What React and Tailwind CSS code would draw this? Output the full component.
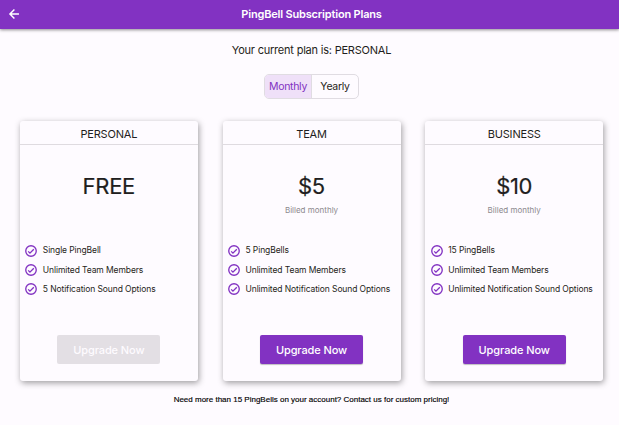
import React from 'react';

const plans = [
  {
    name: 'PERSONAL',
    price: 'FREE',
    features: ['Single PingBell', 'Unlimited Team Members', '5 Notification Sound Options'],
    current: true,
  },
  {
    name: 'TEAM',
    price: '$5',
    billing: 'Billed monthly',
    features: ['5 PingBells', 'Unlimited Team Members', 'Unlimited Notification Sound Options'],
  },
  {
    name: 'BUSINESS',
    price: '$10',
    billing: 'Billed monthly',
    features: ['15 PingBells', 'Unlimited Team Members', 'Unlimited Notification Sound Options'],
  },
];

const ArrowIcon = () => (
  <svg viewBox="0 0 24 24" className="h-[14px] w-[14px]" fill="none" stroke="currentColor" strokeWidth="2.5">
    <path d="M20.5 12H5.5M12.7 4.3L5 12l7.7 7.7" />
  </svg>
);

const CheckIcon = () => (
  <svg
    viewBox="0 0 24 24"
    className="h-[14px] w-[14px] shrink-0 text-[#8232c2]"
    fill="none"
    stroke="currentColor"
    strokeWidth="2.3"
  >
    <circle cx="12" cy="12" r="9" />
    <path d="M7.2 12.6l3 3 6.6-6.6" />
  </svg>
);

const Header = () => (
  <header className="relative flex h-[29px] items-center justify-center bg-[#8232c2] pb-px pl-1 text-white shadow-[0_1px_3px_rgba(0,0,0,0.45)]">
    <button className="absolute left-[7px] top-[7px]" aria-label="Back">
      <ArrowIcon />
    </button>
    <h1 className="text-[11px] font-semibold leading-4 tracking-[-0.18px]">PingBell Subscription Plans</h1>
  </header>
);

const PeriodToggle = () => (
  <div className="mt-4 flex h-[25px] w-[95px] overflow-hidden rounded-[5px] border border-[#e0dce2] text-[10.5px] tracking-[-0.3px]">
    <button className="w-[47px] border-r border-[#e0dce2] bg-[#efe0f8] pt-px text-[#8232c2]">Monthly</button>
    <button className="flex-1 pt-px">Yearly</button>
  </div>
);

const PlanCard = ({ plan }) => (
  <section className="flex h-[260px] w-[178px] flex-col items-center rounded-[3px] bg-[#fefbff] shadow-[1px_2px_6px_rgba(0,0,0,0.38)]">
    <h2 className="h-6 w-full border-b border-[#dfdbe0] text-center text-[11px] leading-[26px] tracking-[-0.2px]">
      {plan.name}
    </h2>
    <div className="mt-[27px] text-[22px] leading-[28px] tracking-[-0.3px] [-webkit-text-stroke:0.2px]">{plan.price}</div>
    <div className="mt-1 h-3 text-[8px] leading-[12px] text-[#8c898e]">{plan.billing}</div>
    <ul className="mt-[25px] w-full pl-[4.5px]">
      {plan.features.map((feature) => (
        <li key={feature} className="flex h-[19.4px] items-center gap-[4.5px] text-[8.5px] tracking-[-0.1px]">
          <CheckIcon />
          <span className="whitespace-nowrap">{feature}</span>
        </li>
      ))}
    </ul>
    {plan.current ? (
      <button className="mb-[17px] mt-auto h-[29px] w-[103px] rounded-[2px] bg-[#e3dfe4] pt-px text-[11px] font-medium tracking-[-0.1px] text-[#fefbff]">
        Upgrade Now
      </button>
    ) : (
      <button className="mb-[17px] mt-auto h-[29px] w-[103px] rounded-[2px] bg-[#8232c2] pt-px text-[11px] font-medium tracking-[-0.1px] text-white shadow-[0_1px_1px_rgba(0,0,0,0.25)]">
        Upgrade Now
      </button>
    )}
  </section>
);

const App = () => {
  return (
    <div className="h-[425px] w-[619px] overflow-hidden bg-[#fefbff] font-['Inter',sans-serif] text-[#1f1e20]">
      <Header />
      <main className="flex flex-col items-center pl-1">
        <p className="mt-[13px] text-[11px] leading-4 tracking-[-0.21px]">Your current plan is: PERSONAL</p>
        <PeriodToggle />
        <div className="mt-[22px] flex gap-[24.7px]">
          {plans.map((plan) => (
            <PlanCard key={plan.name} plan={plan} />
          ))}
        </div>
        <p className="mt-[13px] font-['Liberation_Sans',sans-serif] text-[8px] leading-[12px] text-black [-webkit-text-stroke:0.15px]">
          Need more than 15 PingBells on your account? Contact us for custom pricing!
        </p>
      </main>
    </div>
  );
};

export default App;
